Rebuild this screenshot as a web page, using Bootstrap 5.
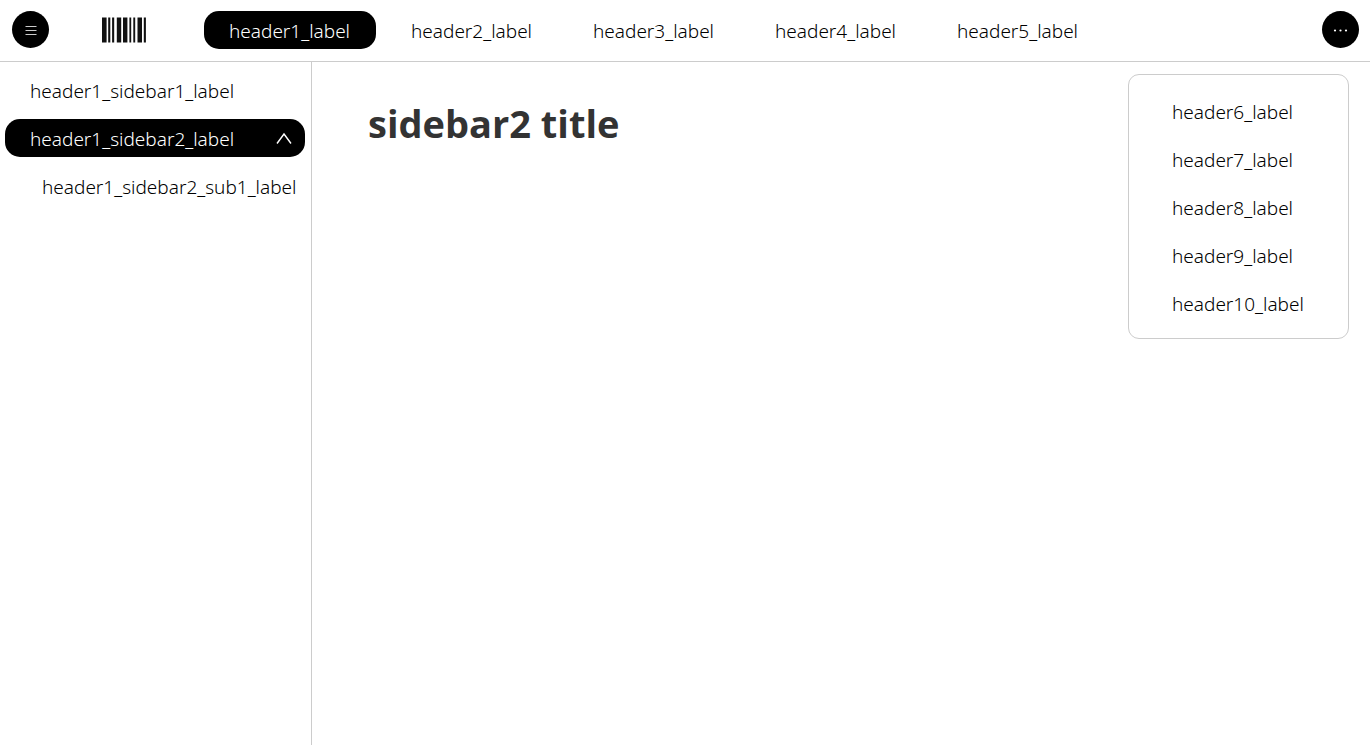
<!DOCTYPE html>
<html lang="en">
<head>
<meta charset="utf-8">
<meta name="viewport" content="width=device-width, initial-scale=1">
<title>sidebar2 title</title>
<link href="https://cdn.jsdelivr.net/npm/bootstrap@5.3.0/dist/css/bootstrap.min.css" rel="stylesheet">
<style>
  body { font-family: "Noto Sans", "Open Sans", sans-serif; font-size: 19px; font-weight: 300; line-height: 28px; color: #000; }
  .line { border-color: #ccc !important; }
  .topbar { height: 62px; padding: 0 11px 2px 12px; }
  .pill { display: flex; align-items: center; height: 38px; padding: 2px 25px 0; border: 0; border-radius: 15px; color: #000; background: none; text-decoration: none; white-space: nowrap; }
  .pill.active { background: #000; color: #fff; }
  .round { width: 37px; height: 37px; border: 0; border-radius: 50%; background: #000; color: #fff; padding: 0; }
  .brand { margin: 0 57px 0 52px; }
  .tabs { gap: 10px; }
  .tabs .pill { min-width: 172px; }
  .side { width: 312px; padding: 9px 6px 10px 5px; gap: 10px; }
  .sub { padding-left: 37px; padding-right: 0; }
  .toggle { padding-right: 13px; font-weight: inherit; }
  .page-title { font-family: "Open Sans", "Noto Sans", sans-serif; font-size: 38px; line-height: 48px; font-weight: 700; color: #333; margin: 37px 56px; }
  .more { top: 74px; right: 21px; min-width: 221px; padding: 17px 18px 16px; gap: 10px; border-radius: 11px; }
</style>
</head>
<body class="d-flex flex-column min-vh-100">
<header class="topbar line border-bottom d-flex align-items-center">
  <button class="round d-flex align-items-center justify-content-center" type="button" aria-label="Toggle sidebar">
    <svg width="12" height="12" viewBox="0 0 12 12" stroke="#ccc" stroke-width="1"><path d="M.5 2.5h11M.5 6.5h11M.5 10.5h11"/></svg>
  </button>
  <a class="brand d-flex" href="#" aria-label="Home">
    <svg width="46" height="28" viewBox="0 0 46 28" fill="#111"><path d="M1 1.5h4.6v25H1zM7.2 1.5h2.1v25H7.2zM11.1 1.5h2.1v25h-2.1zM15.8 1.5h4.4v25h-4.4zM22 1.5h4.4v25H22zM28.4 1.5h1.8v25h-1.8zM32.3 1.5h1.9v25h-1.9zM36.5 1.5h4.5v25h-4.5zM42.8 1.5h2.1v25h-2.1z"/></svg>
  </a>
  <nav class="tabs d-flex" aria-label="Main">
    <a class="pill active" href="#" aria-current="page">header1_label</a>
    <a class="pill" href="#">header2_label</a>
    <a class="pill" href="#">header3_label</a>
    <a class="pill" href="#">header4_label</a>
    <a class="pill" href="#">header5_label</a>
  </nav>
  <button class="round ms-auto d-flex align-items-center justify-content-center" type="button" aria-label="More" aria-expanded="true">
    <svg width="15" height="6" viewBox="0 0 15 6" fill="#fff"><circle cx="2" cy="3.5" r="1.1"/><circle cx="7.5" cy="3.5" r="1.1"/><circle cx="13" cy="3.5" r="1.1"/></svg>
  </button>
</header>
<nav class="more line position-absolute border bg-white d-flex flex-column" aria-label="More">
  <a class="pill" href="#">header6_label</a>
  <a class="pill" href="#">header7_label</a>
  <a class="pill" href="#">header8_label</a>
  <a class="pill" href="#">header9_label</a>
  <a class="pill" href="#">header10_label</a>
</nav>
<div class="d-flex flex-grow-1">
  <nav class="side line border-end d-flex flex-column flex-shrink-0" aria-label="Sidebar">
    <a class="pill" href="#">header1_sidebar1_label</a>
    <button class="pill toggle active justify-content-between" type="button" aria-expanded="true">header1_sidebar2_label
      <svg width="16" height="14" viewBox="0 0 16 14" fill="none" stroke="#fff" stroke-width="1.4"><path d="M1 11.5L8 2L15 11.5"/></svg>
    </button>
    <a class="pill sub" href="#">header1_sidebar2_sub1_label</a>
  </nav>
  <main class="flex-grow-1"><h1 class="page-title">sidebar2 title</h1></main>
</div>
<script src="https://cdn.jsdelivr.net/npm/bootstrap@5.3.0/dist/js/bootstrap.bundle.min.js"></script>
</body>
</html>
